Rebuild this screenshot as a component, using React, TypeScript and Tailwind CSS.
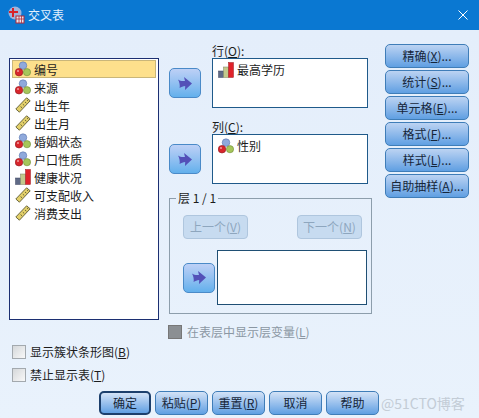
const cjk = { fontFamily: '"Noto Sans CJK SC", "Liberation Sans", sans-serif' };

function NominalIcon() {
  return (
    <svg width="16" height="16" viewBox="0 0 16 16" className="shrink-0">
      <circle cx="8" cy="4.6" r="3.8" fill="#8fa9dc" stroke="#5a75ac" strokeWidth="0.6" />
      <circle cx="4" cy="11.2" r="3.8" fill="#d8262c" stroke="#8e1a20" strokeWidth="0.6" />
      <circle cx="12" cy="11.2" r="3.6" fill="#a6c65a" stroke="#6f8c35" strokeWidth="0.6" />
      <circle cx="3" cy="10" r="1" fill="#f3a0a0" />
    </svg>
  );
}

function ScaleIcon() {
  return (
    <svg width="16" height="16" viewBox="0 0 16 16" className="shrink-0">
      <path d="M11.6 0.8 L15.2 3.8 L4.4 15.2 L0.8 12 Z" fill="#e3d06a" stroke="#5d5a34" strokeWidth="0.9" />
      <path d="M10 5 L11.4 6.2 M7.8 7.2 L9.2 8.4 M5.6 9.6 L7 10.8 M12 3 L13.2 4" stroke="#5d5a34" strokeWidth="0.9" />
    </svg>
  );
}

function OrdinalIcon() {
  return (
    <svg width="16" height="16" viewBox="0 0 16 16" className="shrink-0">
      <rect x="0.5" y="9" width="5" height="6.5" fill="#5f6a86" stroke="#3c4560" strokeWidth="0.5" />
      <rect x="5.5" y="5" width="5" height="10.5" fill="#c3c98c" stroke="#7c8160" strokeWidth="0.5" />
      <rect x="10.5" y="0.5" width="5" height="15" fill="#e0222a" stroke="#9a1a20" strokeWidth="0.5" />
    </svg>
  );
}

function ArrowButton() {
  return (
    <button className="w-[32px] h-[30px] shrink-0 rounded-[5px] border border-[#4a8ac8] bg-gradient-to-b from-[#bdd0f6] to-[#62b0ec] flex items-center justify-center">
      <svg width="16" height="15" viewBox="0 0 16 15">
        <path d="M1 3.5 C3 5 5 5.2 8 5 L7 1 L15 7.5 L8 14 L8.2 10 C6 10.4 4.4 11 2.6 12 C3.2 9.5 2.4 6 1 3.5 Z" fill="#5350b8" />
      </svg>
    </button>
  );
}

function Mnemonic({ label, letter, tail = '' }: { label: string; letter: string; tail?: string }) {
  return (
    <>
      {label}(<u>{letter}</u>){tail}
    </>
  );
}

function SideButton({ children }: { children: React.ReactNode }) {
  return (
    <button className="w-[84px] h-[24px] rounded-[5px] border border-[#3f7db8] bg-gradient-to-b from-[#bcd3f2] to-[#5f9fe2] flex items-center justify-center text-[12px] leading-none text-[#16263a] whitespace-nowrap">
      {children}
    </button>
  );
}

function DisabledButton({ children }: { children: React.ReactNode }) {
  return (
    <button className="w-[65px] h-[24px] rounded-[4px] border border-[#afc6de] bg-[#c7dbf0] flex items-center justify-center text-[12px] leading-none text-[#8ea6be] whitespace-nowrap">
      {children}
    </button>
  );
}

function FooterButton({ children, width, primary }: { children: React.ReactNode; width: string; primary?: boolean }) {
  return (
    <button
      className={`${width} h-[24px] rounded-[5px] border ${primary ? 'border-[#1c3f6c] border-[2px]' : 'border-[#3f7db8]'} bg-gradient-to-b from-[#d3e2f6] to-[#5f9fe2] flex items-center justify-center text-[12px] leading-none text-[#16263a] whitespace-nowrap`}
    >
      {children}
    </button>
  );
}

function CheckBox({ disabled }: { disabled?: boolean }) {
  return (
    <span
      className={`w-[14px] h-[14px] shrink-0 border ${disabled ? 'border-[#777] bg-[#8b8f93]' : 'border-[#a3a9ae] bg-gradient-to-br from-[#d5d8da] to-[#f8f8f8]'}`}
    />
  );
}

const variables = [
  { name: '编号', icon: <NominalIcon /> },
  { name: '来源', icon: <NominalIcon /> },
  { name: '出生年', icon: <ScaleIcon /> },
  { name: '出生月', icon: <ScaleIcon /> },
  { name: '婚姻状态', icon: <NominalIcon /> },
  { name: '户口性质', icon: <NominalIcon /> },
  { name: '健康状况', icon: <OrdinalIcon /> },
  { name: '可支配收入', icon: <ScaleIcon /> },
  { name: '消费支出', icon: <ScaleIcon /> },
];

export default function App() {
  return (
    <div className="relative w-[479px] h-[418px] overflow-hidden flex flex-col bg-[#e6f0fb] text-[12px] text-[#1c1c1c]" style={cjk}>
      {/* title bar */}
      <div className="h-[30px] shrink-0 bg-[#0a78d2] flex items-center pl-[7px] pr-[11px]">
        <svg width="18" height="18" viewBox="0 0 18 18" className="shrink-0">
          <circle cx="8" cy="7" r="6.5" fill="#9fb4dc" />
          <path d="M2 6 H11 M6 2 V11" stroke="#d8222a" strokeWidth="2" />
          <rect x="9" y="10" width="8" height="7" fill="#e8e8ee" stroke="#b22a3a" strokeWidth="1" />
          <path d="M9 13 H17 M12 10 V17 M14.5 10 V17" stroke="#b22a3a" strokeWidth="0.8" />
        </svg>
        <span className="ml-[3px] text-[12px] text-[#e4f1fd]">交叉表</span>
        <svg width="10" height="10" viewBox="0 0 10 10" className="ml-auto">
          <path d="M0.5 0.5 L9.5 9.5 M9.5 0.5 L0.5 9.5" stroke="#fff" strokeWidth="1" />
        </svg>
      </div>

      <div className="flex-1 flex flex-col bg-gradient-to-b from-[#e4eefb] to-[#e9f2fc]">
        <div className="flex items-start h-[290px] shrink-0">
          {/* variable list */}
          <ul className="ml-[9px] mt-[28px] w-[150px] h-[262px] shrink-0 border border-[#1c2f72] bg-white pt-[1px] px-[2px]">
            {variables.map((v, i) => (
              <li
                key={v.name}
                className={`h-[18px] flex items-center gap-[3px] pl-[2px] border ${i === 0 ? 'bg-[#fde08c] border-[#c9b679]' : 'border-transparent'}`}
              >
                {v.icon}
                <span className="leading-none mt-[2px]">{v.name}</span>
              </li>
            ))}
          </ul>

          {/* row, column, layer */}
          <div className="ml-[10px] mt-[14px] w-[203px] shrink-0 flex flex-col">
            <div className="flex items-start gap-[11px]">
              <div className="mt-[24px]">
                <ArrowButton />
              </div>
              <div>
                <div className="h-[14px] flex items-center leading-none">
                  <Mnemonic label="行" letter="O" tail=":" />
                </div>
                <div className="w-[156px] h-[50px] border border-[#1f5a8a] bg-white flex items-start gap-[3px] pl-[5px] pt-[3px]">
                  <OrdinalIcon />
                  <span className="leading-[16px]">最高学历</span>
                </div>
              </div>
            </div>
            <div className="mt-[12px] flex items-start gap-[11px]">
              <div className="mt-[24px]">
                <ArrowButton />
              </div>
              <div>
                <div className="h-[14px] flex items-center leading-none">
                  <Mnemonic label="列" letter="C" tail=":" />
                </div>
                <div className="w-[156px] h-[50px] border border-[#1f5a8a] bg-white flex items-start gap-[3px] pl-[5px] pt-[3px]">
                  <NominalIcon />
                  <span className="leading-[16px]">性别</span>
                </div>
              </div>
            </div>

            <div className="relative mt-[14px] h-[116px] border border-[#8d9eac] pl-[13px] pr-[4px] pt-[16px]">
              <span className="absolute left-[6px] -top-[8px] bg-[#e6f0fb] px-[2px] leading-[14px]">层 1 / 1</span>
              <div className="flex justify-between pr-[5px]">
                <DisabledButton>
                  <Mnemonic label="上一个" letter="V" />
                </DisabledButton>
                <DisabledButton>
                  <Mnemonic label="下一个" letter="N" />
                </DisabledButton>
              </div>
              <div className="mt-[11px] flex items-center gap-[2px]">
                <ArrowButton />
                <div className="w-[150px] h-[55px] shrink-0 border border-[#1f4f74] bg-white" />
              </div>
            </div>

            <div className="mt-[11px] flex items-center gap-[5px] -ml-[1px] text-[#8b97a3] leading-none">
              <CheckBox disabled />
              <span>
                <Mnemonic label="在表层中显示层变量" letter="L" />
              </span>
            </div>
          </div>

          {/* option buttons */}
          <div className="ml-[13px] mt-[14px] flex flex-col gap-[2px]">
            <SideButton>
              <Mnemonic label="精确" letter="X" tail="..." />
            </SideButton>
            <SideButton>
              <Mnemonic label="统计" letter="S" tail="..." />
            </SideButton>
            <SideButton>
              <Mnemonic label="单元格" letter="E" tail="..." />
            </SideButton>
            <SideButton>
              <Mnemonic label="格式" letter="F" tail="..." />
            </SideButton>
            <SideButton>
              <Mnemonic label="样式" letter="L" tail="..." />
            </SideButton>
            <SideButton>
              <Mnemonic label="自助抽样" letter="A" tail="..." />
            </SideButton>
          </div>
        </div>

        {/* options */}
        <div className="ml-[12px] mt-[25px] flex items-center gap-[4px] h-[14px] leading-none">
          <CheckBox />
          <span>
            <Mnemonic label="显示簇状条形图" letter="B" />
          </span>
        </div>
        <div className="ml-[12px] mt-[9px] flex items-center gap-[4px] h-[14px] leading-none">
          <CheckBox />
          <span>
            <Mnemonic label="禁止显示表" letter="T" />
          </span>
        </div>

        {/* footer */}
        <div className="ml-[99px] mt-[9px] flex items-center">
          <div className="flex gap-[4px]">
            <FooterButton width="w-[52px]" primary>
              确定
            </FooterButton>
            <FooterButton width="w-[53px]">
              <Mnemonic label="粘贴" letter="P" />
            </FooterButton>
            <FooterButton width="w-[53px]">
              <Mnemonic label="重置" letter="R" />
            </FooterButton>
            <FooterButton width="w-[53px]">取消</FooterButton>
            <FooterButton width="w-[53px]">帮助</FooterButton>
          </div>
          {/* watermark */}
          <span className="ml-[2px] text-[14px] leading-none text-[#c3ccd6] whitespace-nowrap">@51CTO博客</span>
        </div>
      </div>
    </div>
  );
}
